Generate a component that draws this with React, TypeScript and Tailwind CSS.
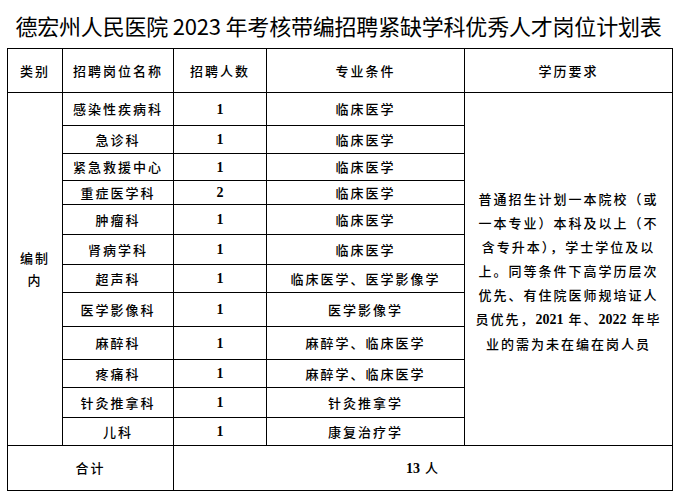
import React from "react";

const rows = [
  { name: "感染性疾病科", n: "1", major: "临床医学", h: "h-[33px]" },
  { name: "急诊科", n: "1", major: "临床医学", h: "h-[28px]" },
  { name: "紧急救援中心", n: "1", major: "临床医学", h: "h-[27px]" },
  { name: "重症医学科", n: "2", major: "临床医学", h: "h-[24px]" },
  { name: "肿瘤科", n: "1", major: "临床医学", h: "h-[30px]" },
  { name: "肾病学科", n: "1", major: "临床医学", h: "h-[30px]" },
  { name: "超声科", n: "1", major: "临床医学、医学影像学", h: "h-[28px]" },
  { name: "医学影像科", n: "1", major: "医学影像学", h: "h-[34px]" },
  { name: "麻醉科", n: "1", major: "麻醉学、临床医学", h: "h-[33px]" },
  { name: "疼痛科", n: "1", major: "麻醉学、临床医学", h: "h-[28px]" },
  { name: "针灸推拿科", n: "1", major: "针灸推拿学", h: "h-[30px]" },
  { name: "儿科", n: "1", major: "康复治疗学", h: "h-[28px]" },
];

const eduLines = [
  "普通招生计划一本院校（或",
  "一本专业）本科及以上（不",
  "含专升本），学士学位及以",
  "上。同等条件下高学历层次",
  "优先、有住院医师规培证人",
];

const cjk = "font-['Noto_Sans_CJK_SC',sans-serif]";
const cell = "border border-black text-center align-middle p-0";
const num = "font-['Liberation_Serif',serif] font-bold text-[14px] tracking-normal";

export default function App() {
  return (
    <div className={`w-[677px] h-[496px] overflow-hidden bg-white text-black ${cjk}`}>
      <div className="h-[48px] flex items-center justify-center pt-[2px] text-[22px] leading-none tracking-[-0.2px]">
        德宏州人民医院 2023 年考核带编招聘紧缺学科优秀人才岗位计划表
      </div>
      <table className="ml-[7px] border-collapse table-fixed w-[665px] text-[13px] tracking-[2px] font-medium">
        <colgroup>
          <col className="w-[55px]" />
          <col className="w-[111px]" />
          <col className="w-[93px]" />
          <col className="w-[198px]" />
          <col className="w-[208px]" />
        </colgroup>
        <tbody>
          <tr className="h-[44px]">
            <td className={cell}>类别</td>
            <td className={cell}>招聘岗位名称</td>
            <td className={cell}>招聘人数</td>
            <td className={cell}>专业条件</td>
            <td className={cell}>学历要求</td>
          </tr>
          {rows.map((r, i) => (
            <tr key={i} className={r.h}>
              {i === 0 && (
                <td rowSpan={12} className={cell}>
                  <div className="mx-auto w-[30px] leading-[22px]">编制内</div>
                </td>
              )}
              <td className={cell}>{r.name}</td>
              <td className={`${cell} ${num}`}>{r.n}</td>
              <td className={cell}>{r.major}</td>
              {i === 0 && (
                <td rowSpan={12} className={cell}>
                  <div className="flex flex-col items-center leading-[24px] pt-[4px]">
                    {eduLines.map((l, j) => (
                      <div key={j} className="whitespace-nowrap">{l}</div>
                    ))}
                    <div className="whitespace-nowrap">
                      员优先，<span className={num}>2021</span> 年、<span className={num}>2022</span> 年毕
                    </div>
                    <div className="whitespace-nowrap">业的需为未在编在岗人员</div>
                  </div>
                </td>
              )}
            </tr>
          ))}
          <tr className="h-[45px]">
            <td colSpan={2} className={cell}>合计</td>
            <td colSpan={3} className={cell}>
              <span className={num}>13</span> 人
            </td>
          </tr>
        </tbody>
      </table>
      <div className="mt-[2px] ml-[64px] text-[16px] tracking-[3px]">（二）招聘对象</div>
    </div>
  );
}
